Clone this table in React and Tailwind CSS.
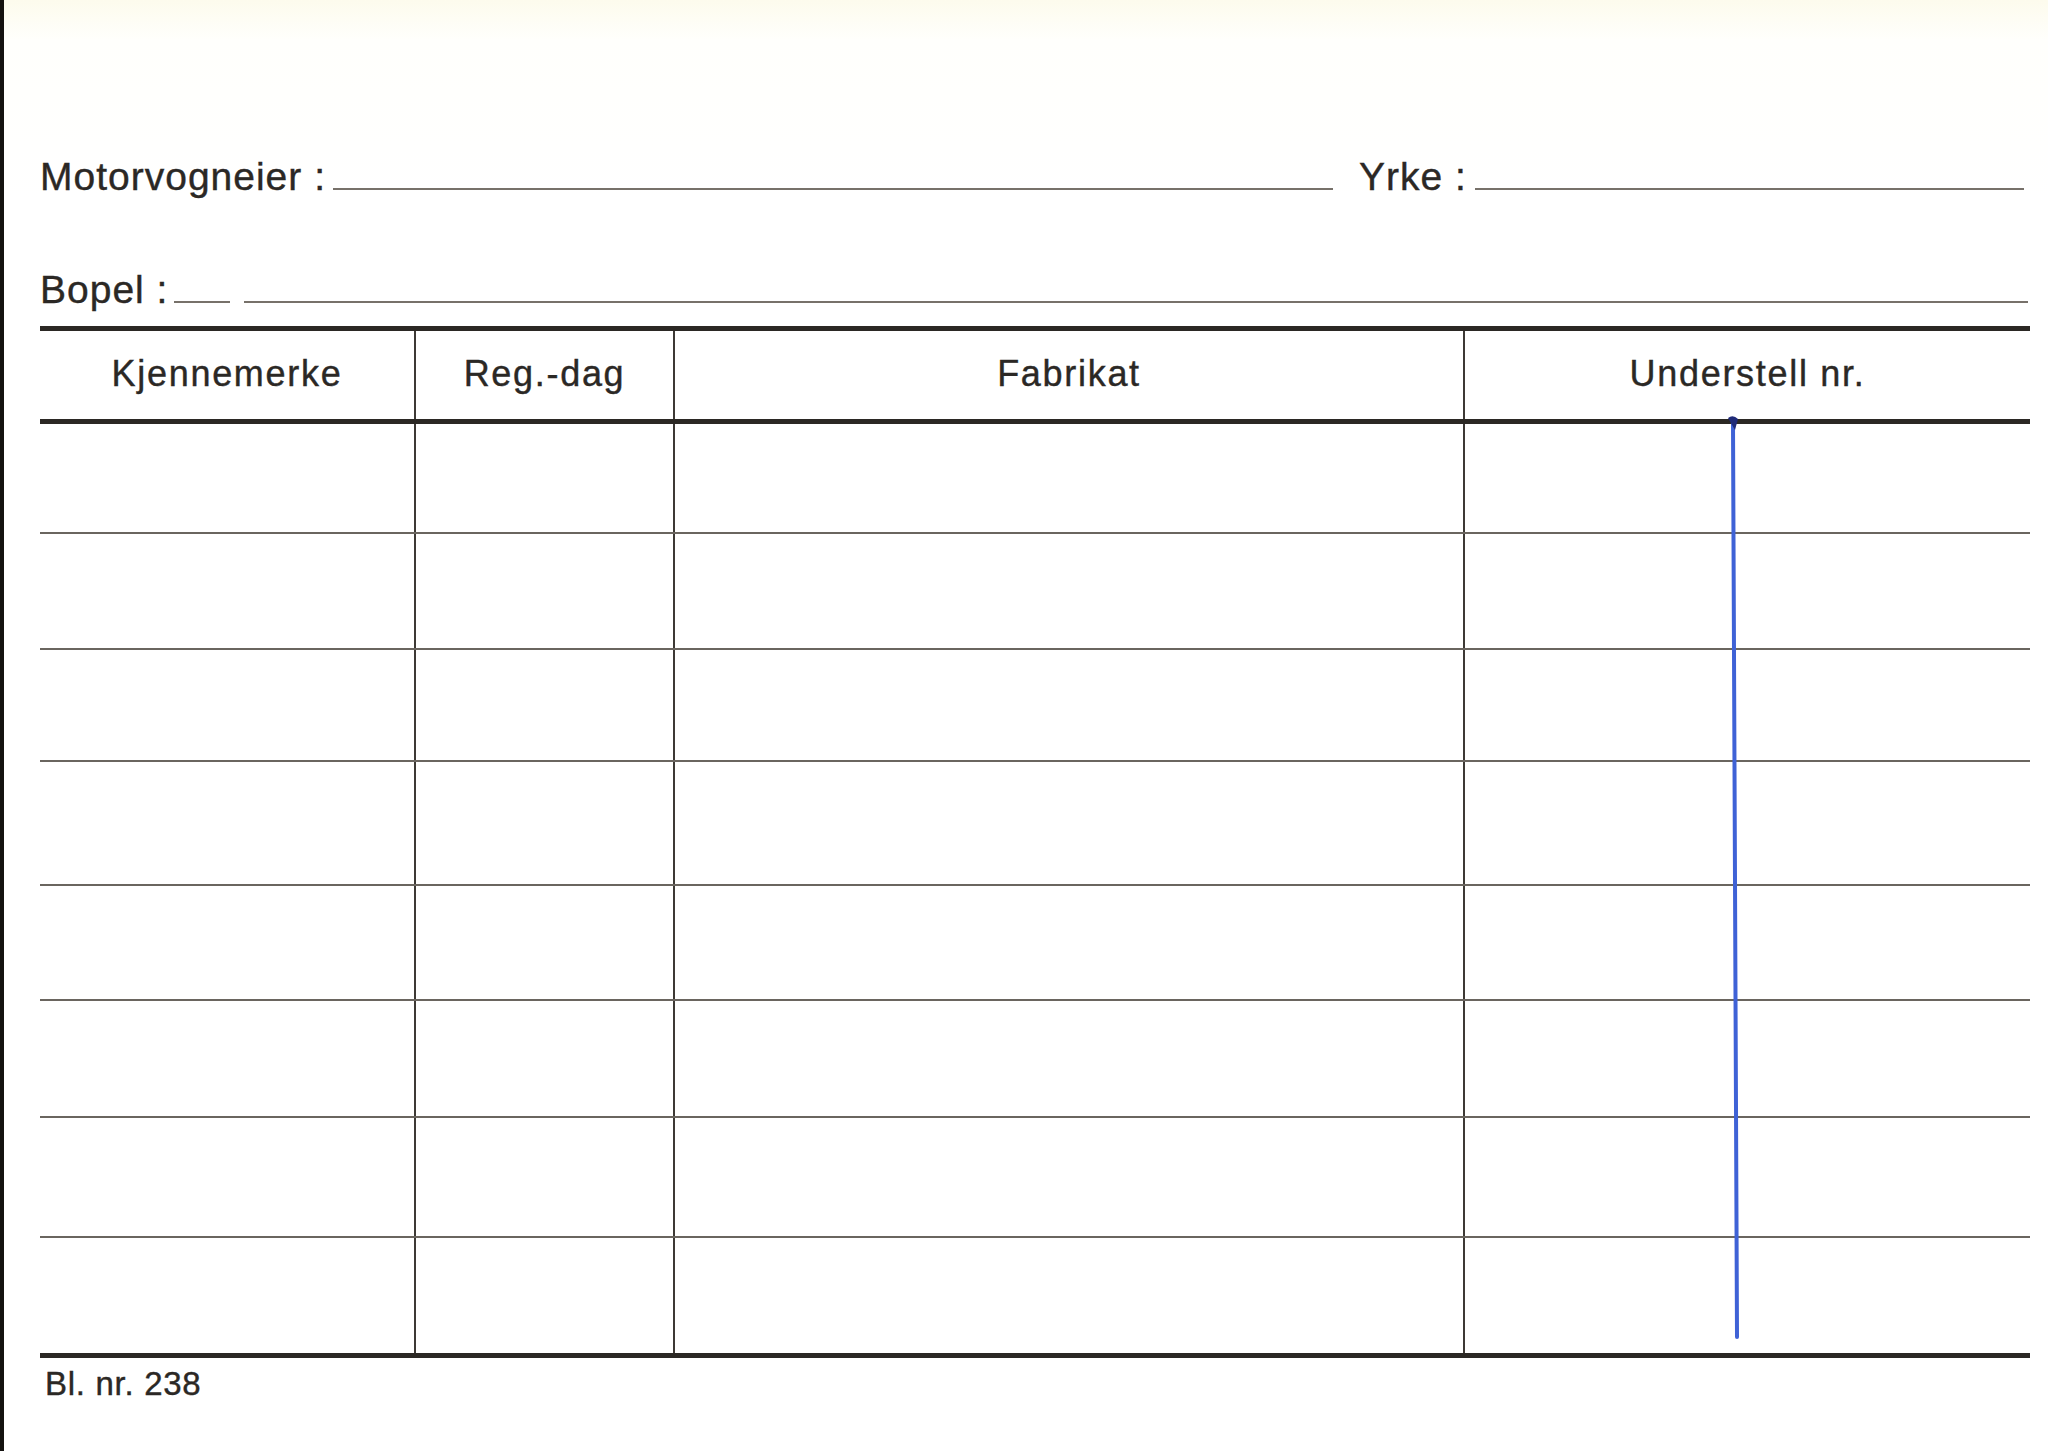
import React from 'react';

const rowHeights = [110, 116, 112, 124, 115, 117, 120, 115];

const headers = ['Kjennemerke', 'Reg.-dag', 'Fabrikat', 'Understell nr.'];

export default function App() {
  return (
    <main
      className="relative w-[2048px] h-[1451px] overflow-hidden border-l-4 border-[#141210] bg-[linear-gradient(to_bottom,#fdfbed_0px,#fffffc_40px,#ffffff_200px)] pl-[36px] pr-[18px] text-[#2b2825] [-webkit-text-stroke:0.4px_#2b2825]"
      style={{ fontFamily: '"Liberation Sans", Arial, sans-serif' }}
    >
      {/* owner / occupation */}
      <div className="flex items-baseline pt-[157px] text-[39px] leading-none tracking-[1px]">
        <span>Motorvogneier :</span>
        <div className="ml-[7px] w-[1000px] border-b-2 border-[#77716a]" />
        <span className="ml-[26px]">Yrke :</span>
        <div className="ml-[8px] mr-[6px] flex-1 border-b-2 border-[#77716a]" />
      </div>

      {/* address */}
      <div className="mt-[74px] flex items-baseline text-[39px] leading-none tracking-[1px]">
        <span>Bopel :</span>
        <div className="ml-[6px] w-[56px] border-b-2 border-[#77716a]" />
        <div className="ml-[14px] mr-[2px] flex-1 border-b-2 border-[#77716a]" />
      </div>

      {/* table */}
      <div className="mt-[17px]">
        <div className="grid h-[98px] grid-cols-[374px_259px_790px_1fr] border-y-[5px] border-[#2b2824]">
          {headers.map((h, i) => (
            <div
              key={h}
              className={
                'flex items-center justify-center pb-[3px] text-[36px] leading-none tracking-[1.7px] ' +
                (i > 0 ? 'border-l-2 border-[#3d3935]' : '')
              }
            >
              {h}
            </div>
          ))}
        </div>

        {rowHeights.map((h, r) => (
          <div
            key={r}
            className={
              'grid grid-cols-[374px_259px_790px_1fr] ' +
              (r < rowHeights.length - 1 ? 'border-b-2 border-[#6a655f]' : '')
            }
            style={{ height: h }}
          >
            <div />
            <div className="border-l-2 border-[#3d3935]" />
            <div className="border-l-2 border-[#3d3935]" />
            <div className="border-l-2 border-[#3d3935]" />
          </div>
        ))}

        <div className="h-[5px] bg-[#2b2824]" />
      </div>

      <div className="ml-[5px] mt-[9px] text-[33px] leading-none tracking-[0.7px]">Bl. nr. 238</div>

      {/* pen stroke in the Understell column */}
      <svg className="pointer-events-none absolute left-0 top-0" width="2048" height="1451">
        <line x1="1729" y1="424" x2="1733" y2="1337" stroke="#3f62d6" strokeWidth="4" strokeLinecap="round" />
        <path d="M1724 418 Q1729 414 1734 419 L1731 430 Z" fill="#1f2a78" />
      </svg>
    </main>
  );
}
